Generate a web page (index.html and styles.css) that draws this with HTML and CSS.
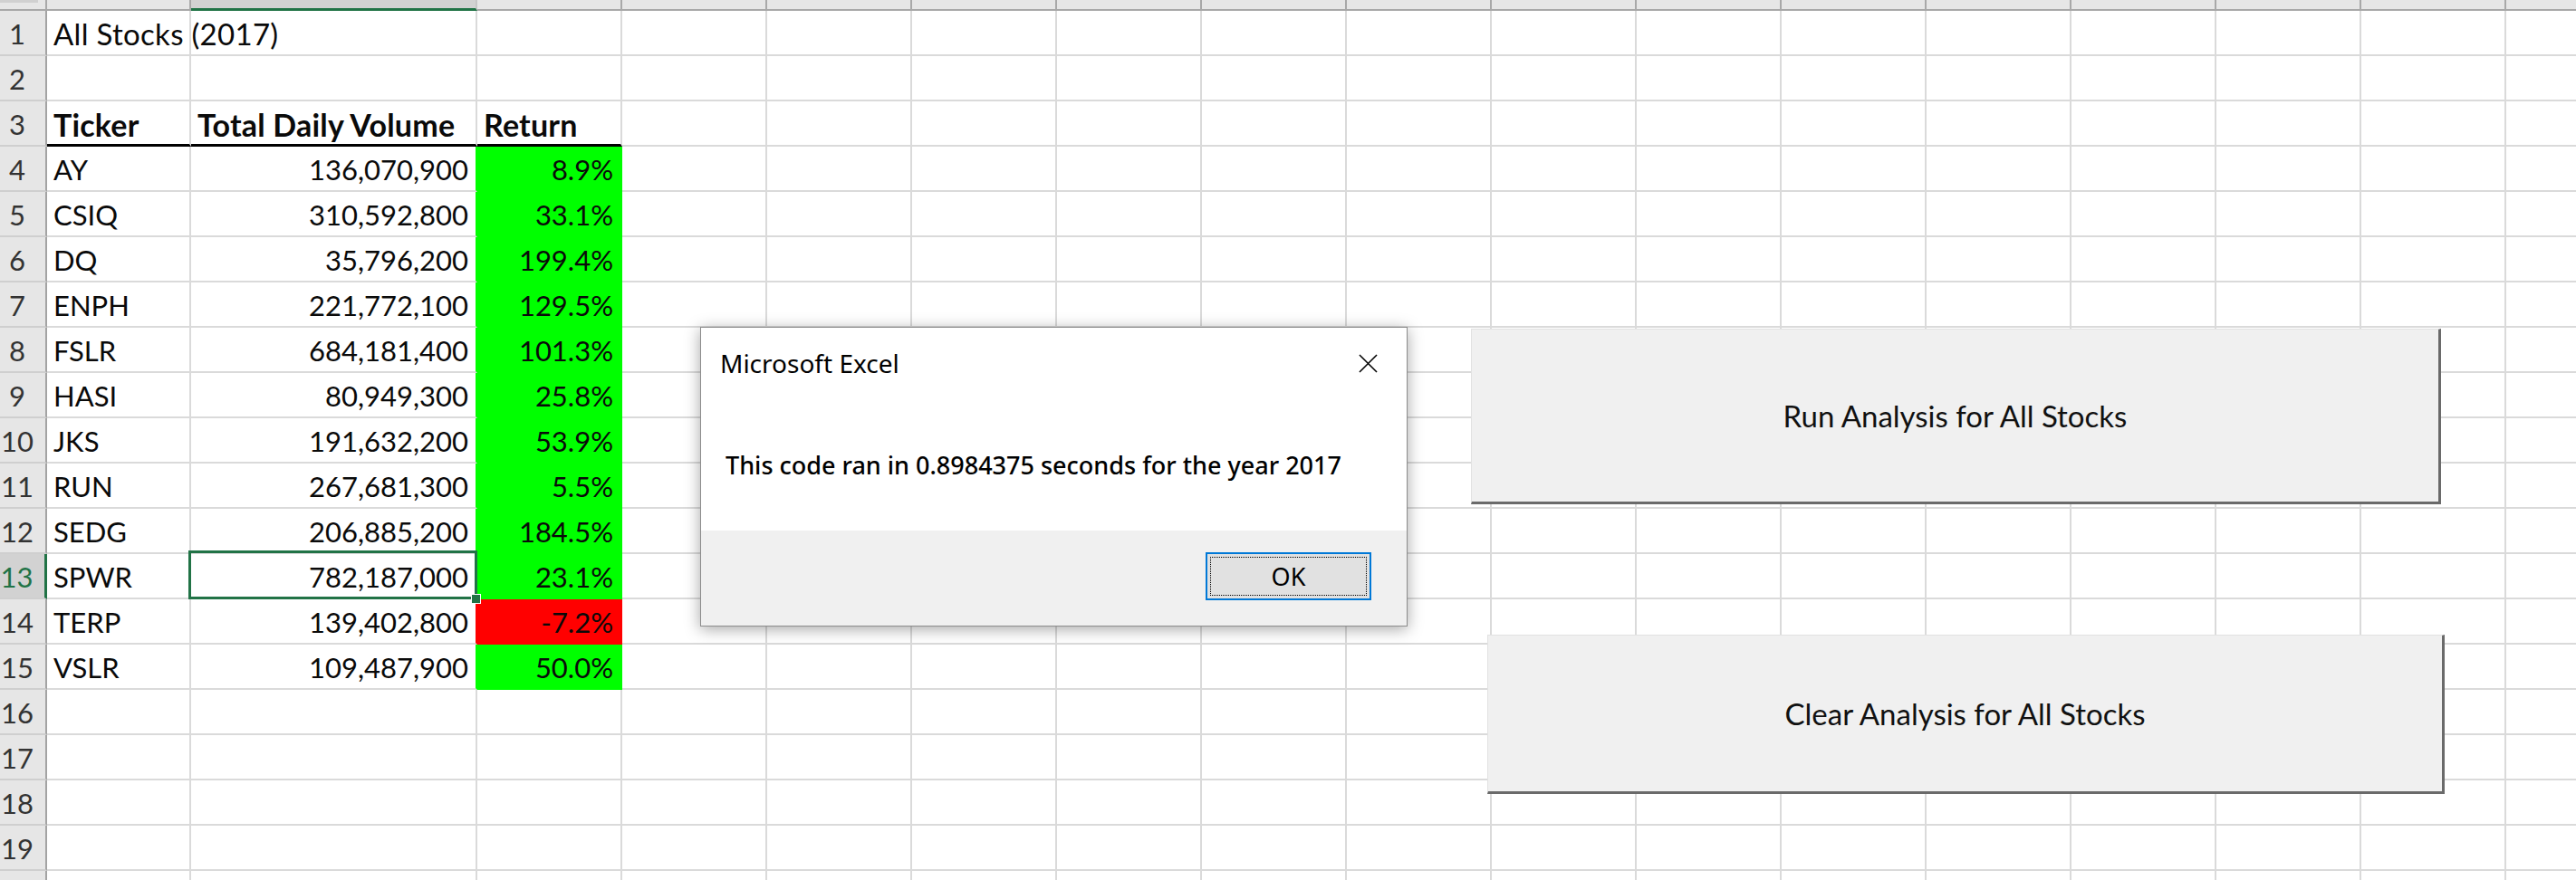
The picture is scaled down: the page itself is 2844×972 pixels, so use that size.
FILE: index.html
```html
<!DOCTYPE html>
<html>
<head>
<meta charset="utf-8">
<title>All Stocks (2017)</title>
<link rel="stylesheet" href="styles.css">
</head>
<body>
<div class="sheet">
  <div class="row colhead">
    <b class="corner"><i class="tri"></i></b><span></span><span class="selcol"></span><span></span><span></span><span></span><span></span><span></span><span></span><span></span><span></span><span></span><span></span><span></span><span></span><span></span><span></span><span></span>
  </div>
  <div class="row"><b class="rh">1</b><span class="title">All Stocks (2017)</span><span></span><span></span><span></span><span></span><span></span><span></span><span></span><span></span><span></span><span></span><span></span><span></span><span></span><span></span><span></span><span></span></div>
  <div class="row"><b class="rh">2</b><span></span><span></span><span></span><span></span><span></span><span></span><span></span><span></span><span></span><span></span><span></span><span></span><span></span><span></span><span></span><span></span><span></span></div>
  <div class="row"><b class="rh">3</b><span class="hd">Ticker</span><span class="hd">Total Daily Volume</span><span class="hd">Return</span><span></span><span></span><span></span><span></span><span></span><span></span><span></span><span></span><span></span><span></span><span></span><span></span><span></span><span></span></div>
  <div class="row"><b class="rh">4</b><span>AY</span><span class="num gl">136,070,900</span><span class="num up">8.9%</span><span></span><span></span><span></span><span></span><span></span><span></span><span></span><span></span><span></span><span></span><span></span><span></span><span></span><span></span></div>
  <div class="row"><b class="rh">5</b><span>CSIQ</span><span class="num gl">310,592,800</span><span class="num up">33.1%</span><span></span><span></span><span></span><span></span><span></span><span></span><span></span><span></span><span></span><span></span><span></span><span></span><span></span><span></span></div>
  <div class="row"><b class="rh">6</b><span>DQ</span><span class="num gl">35,796,200</span><span class="num up">199.4%</span><span></span><span></span><span></span><span></span><span></span><span></span><span></span><span></span><span></span><span></span><span></span><span></span><span></span><span></span></div>
  <div class="row"><b class="rh">7</b><span>ENPH</span><span class="num gl">221,772,100</span><span class="num up">129.5%</span><span></span><span></span><span></span><span></span><span></span><span></span><span></span><span></span><span></span><span></span><span></span><span></span><span></span><span></span></div>
  <div class="row"><b class="rh">8</b><span>FSLR</span><span class="num gl">684,181,400</span><span class="num up">101.3%</span><span></span><span></span><span></span><span></span><span></span><span></span><span></span><span></span><span></span><span></span><span></span><span></span><span></span><span></span></div>
  <div class="row"><b class="rh">9</b><span>HASI</span><span class="num gl">80,949,300</span><span class="num up">25.8%</span><span></span><span></span><span></span><span></span><span></span><span></span><span></span><span></span><span></span><span></span><span></span><span></span><span></span><span></span></div>
  <div class="row"><b class="rh">10</b><span>JKS</span><span class="num gl">191,632,200</span><span class="num up">53.9%</span><span></span><span></span><span></span><span></span><span></span><span></span><span></span><span></span><span></span><span></span><span></span><span></span><span></span><span></span></div>
  <div class="row"><b class="rh">11</b><span>RUN</span><span class="num gl">267,681,300</span><span class="num up">5.5%</span><span></span><span></span><span></span><span></span><span></span><span></span><span></span><span></span><span></span><span></span><span></span><span></span><span></span><span></span></div>
  <div class="row"><b class="rh">12</b><span>SEDG</span><span class="num gl">206,885,200</span><span class="num up">184.5%</span><span></span><span></span><span></span><span></span><span></span><span></span><span></span><span></span><span></span><span></span><span></span><span></span><span></span><span></span></div>
  <div class="row"><b class="rh selrow">13</b><span>SPWR</span><span class="num gl active">782,187,000</span><span class="num up">23.1%</span><span></span><span></span><span></span><span></span><span></span><span></span><span></span><span></span><span></span><span></span><span></span><span></span><span></span><span></span></div>
  <div class="row"><b class="rh">14</b><span>TERP</span><span class="num rl">139,402,800</span><span class="num down">-7.2%</span><span></span><span></span><span></span><span></span><span></span><span></span><span></span><span></span><span></span><span></span><span></span><span></span><span></span><span></span></div>
  <div class="row"><b class="rh">15</b><span>VSLR</span><span class="num gl">109,487,900</span><span class="num up">50.0%</span><span></span><span></span><span></span><span></span><span></span><span></span><span></span><span></span><span></span><span></span><span></span><span></span><span></span><span></span></div>
  <div class="row"><b class="rh">16</b><span></span><span></span><span></span><span></span><span></span><span></span><span></span><span></span><span></span><span></span><span></span><span></span><span></span><span></span><span></span><span></span><span></span></div>
  <div class="row"><b class="rh">17</b><span></span><span></span><span></span><span></span><span></span><span></span><span></span><span></span><span></span><span></span><span></span><span></span><span></span><span></span><span></span><span></span><span></span></div>
  <div class="row"><b class="rh">18</b><span></span><span></span><span></span><span></span><span></span><span></span><span></span><span></span><span></span><span></span><span></span><span></span><span></span><span></span><span></span><span></span><span></span></div>
  <div class="row"><b class="rh">19</b><span></span><span></span><span></span><span></span><span></span><span></span><span></span><span></span><span></span><span></span><span></span><span></span><span></span><span></span><span></span><span></span><span></span></div>
  <div class="row"><b class="rh"></b><span></span><span></span><span></span><span></span><span></span><span></span><span></span><span></span><span></span><span></span><span></span><span></span><span></span><span></span><span></span><span></span><span></span></div>
</div>

<div class="btn btn-run">Run Analysis for All Stocks</div>
<div class="btn btn-clear">Clear Analysis for All Stocks</div>

<div class="dialog">
  <div class="dlg-title">
    <span>Microsoft Excel</span>
    <svg class="dlg-close" width="22" height="22" viewBox="0 0 22 22"><path d="M1 1 L21 21 M21 1 L1 21" stroke="#000" stroke-width="1.6" fill="none"/></svg>
  </div>
  <div class="dlg-msg">This code ran in 0.8984375 seconds for the year 2017</div>
  <div class="dlg-foot">
    <div class="dlg-ok"><span>OK</span></div>
  </div>
</div>
</body>
</html>
```

FILE: styles.css
```css
* { box-sizing: border-box; }
html, body { margin: 0; padding: 0; }
body {
  width: 2844px;
  height: 972px;
  overflow: hidden;
  background: #fff;
  position: relative;
  font-family: "Lato", "Liberation Sans", sans-serif;
}

.sheet {
  display: flex;
  flex-direction: column;
  width: 2844px;
}

.row {
  display: grid;
  grid-template-columns: 52px 159px 316px 160px repeat(14, 160px);
  height: 50px;
  flex: none;
}

.row > span {
  border-right: 2px solid #dadada;
  border-bottom: 2px solid #dadada;
  display: flex;
  align-items: flex-end;
  padding: 0 8px 7px 7px;
  font-size: 31px;
  line-height: 31px;
  color: #0a0a0a;
  white-space: nowrap;
  overflow: visible;
  position: relative;
}

.row > span.title { font-size: 33px; letter-spacing: 0.3px; }
.row > span.num { justify-content: flex-end; }
.row > span.hd {
  font-weight: 700;
  font-size: 34px;
  letter-spacing: 0.2px;
  border-bottom: 3px solid #000;
  padding-bottom: 6px;
}

.row > span.up { background: #00ff00; border-right-color: #00ff00; border-bottom-color: #00ff00; }
.row > span.down { background: #ff0000; border-right-color: #ff0000; border-bottom-color: #ff0000; }
.row > span.gl { border-right-color: #00ff00; }
.row > span.rl { border-right-color: #ff0000; }

.rh {
  background: #e6e6e6;
  border-right: 2px solid #a3a3a3;
  border-bottom: 2px solid #cfcfcf;
  font-weight: 400;
  font-size: 31px;
  line-height: 31px;
  color: #333;
  display: flex;
  align-items: flex-end;
  justify-content: center;
  padding: 0 12px 7px 0;
}
.rh.selrow {
  background: #d2d2d2;
  color: #217346;
  border-right: 3px solid #217346;
}

/* column header strip */
.colhead { height: 12px; }
.colhead > span {
  background: #e6e6e6;
  border-right: 2px solid #a8a8a8;
  border-bottom: 2px solid #a8a8a8;
  padding: 0;
}
.colhead > span.selcol {
  background: #d2d2d2;
  border-right-color: #c6c6c6;
  border-bottom: 3px solid #217346;
}
.corner {
  background: #e6e6e6;
  border-right: 2px solid #a8a8a8;
  border-bottom: 2px solid #a8a8a8;
  position: relative;
}
.corner .tri {
  position: absolute;
  left: 0;
  top: 0;
  width: 42px;
  height: 3px;
  background: #d0d0d0;
}

/* active cell */
.active::after {
  content: "";
  position: absolute;
  left: -3px;
  top: -4px;
  right: -2px;
  bottom: -2px;
  border: 3px solid #217346;
  pointer-events: none;
}
.active::before {
  content: "";
  position: absolute;
  right: -6px;
  bottom: -7px;
  width: 9px;
  height: 9px;
  background: #217346;
  border: 1px solid #fff;
  z-index: 2;
}

/* macro buttons */
.btn {
  position: absolute;
  background: #f0f0f0;
  border-top: 1px solid #e2e2e2;
  border-left: 1px solid #e2e2e2;
  border-right: 3px solid #6a6a6a;
  border-bottom: 3px solid #6a6a6a;
  display: flex;
  align-items: center;
  justify-content: center;
  font-size: 33px;
  color: #111;
  white-space: nowrap;
}
.btn-run { left: 1624px; top: 363px; width: 1071px; height: 194px; }
.btn-clear { left: 1642px; top: 701px; width: 1057px; height: 176px; }

/* message box */
.dialog {
  position: absolute;
  left: 773px;
  top: 361px;
  width: 781px;
  height: 331px;
  background: #fff;
  border: 1px solid #8c8c8c;
  box-shadow: 0 3px 16px rgba(0,0,0,0.35);
  display: flex;
  flex-direction: column;
  font-family: "Noto Sans", "Open Sans", sans-serif;
  color: #000;
}
.dlg-title {
  height: 78px;
  display: flex;
  align-items: center;
  justify-content: space-between;
  padding: 0 32px 0 21px;
  font-size: 28px;
}
.dlg-close { width: 21px; height: 21px; }
.dlg-msg {
  flex: 1;
  display: flex;
  align-items: center;
  padding-left: 27px;
  font-size: 27px;
  font-weight: 500;
  white-space: nowrap;
}
.dlg-foot {
  height: 105px;
  background: #f0f0f0;
  display: flex;
  justify-content: flex-end;
  padding: 24px 39px 0 0;
}
.dlg-ok {
  width: 183px;
  height: 53px;
  border: 2px solid #0078d7;
  background: #e1e1e1;
  padding: 3px;
}
.dlg-ok span {
  display: flex;
  width: 100%;
  height: 100%;
  align-items: center;
  justify-content: center;
  border: 1px dotted #000;
  font-size: 27px;
}
```
